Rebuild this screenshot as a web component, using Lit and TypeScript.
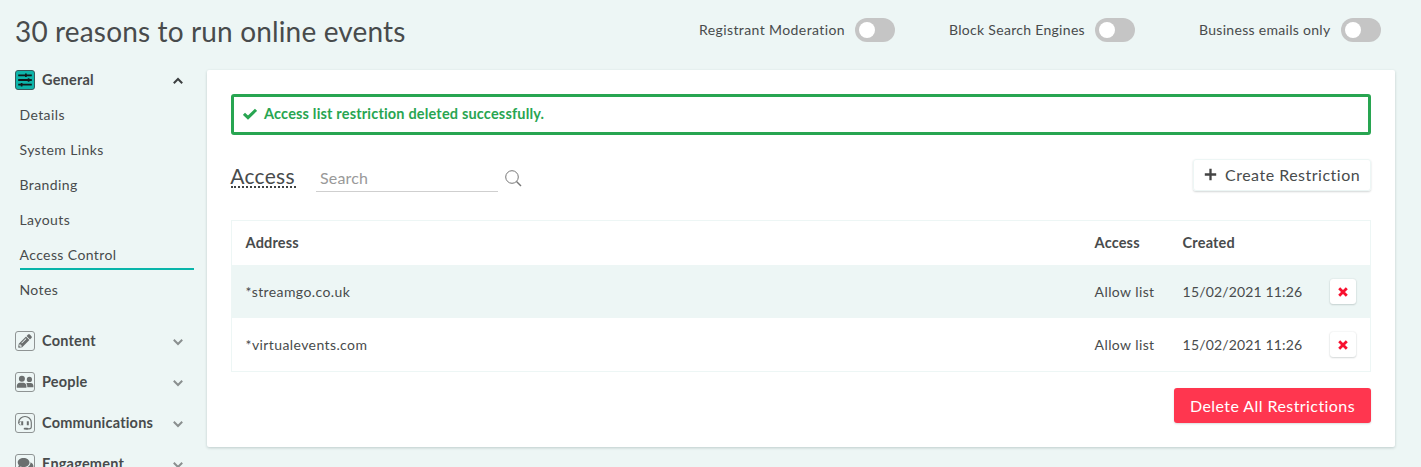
import { LitElement, html, css, svg } from "lit";
import { customElement } from "lit/decorators.js";
import { classMap } from "lit/directives/class-map.js";

const icons = {
  sliders: svg`<path d="M3.2 5.3h13.6M3.2 10h13.6M3.2 14.7h13.6" stroke="currentColor" stroke-width="1.8"/><path d="M10.9 3.5v3.6M13.6 8.2v3.6M6.6 12.9v3.6" stroke="currentColor" stroke-width="1.7"/>`,
  pencil: svg`<g fill="currentColor" transform="translate(3.2 3.2) scale(.0266)"><path d="M497.9 142.1l-46.1 46.1c-4.7 4.7-12.3 4.7-17 0l-111-111c-4.7-4.7-4.7-12.3 0-17l46.1-46.1c18.7-18.7 49.1-18.7 67.9 0l60.1 60.1c18.8 18.7 18.8 49.1 0 67.9zM284.2 99.8L21.6 362.4.4 483.9c-2.9 16.4 11.4 30.6 27.8 27.8l121.5-21.3 262.6-262.6c4.7-4.7 4.7-12.3 0-17l-111-111c-4.8-4.7-12.4-4.7-17.1 0zM124.1 339.9c-5.5-5.5-5.5-14.3 0-19.8l154-154c5.5-5.5 14.3-5.5 19.8 0s5.5 14.3 0 19.8l-154 154c-5.5 5.5-14.3 5.5-19.8 0zM88 424h48v36.3l-64.5 11.3-31.1-31.1L51.7 376H88v48z"/></g>`,
  people: svg`<g fill="currentColor"><circle cx="6.9" cy="6.8" r="3"/><circle cx="14.4" cy="7.4" r="2.6"/><path d="M1.8 15.8v-1.7c0-2 1.3-3.3 3-3.3h3.6c1.7 0 3 1.3 3 3.3v1.7z"/><path d="M12.3 15.3c.1-1.8-.3-3-1-3.9.5-.3 1-.4 1.6-.4h2.9c1.5 0 2.6 1.2 2.6 2.8v1.5z"/></g>`,
  headset: svg`<g fill="none" stroke="currentColor"><path d="M3.7 10.2V9.5a6.3 6 0 0 1 12.6 0v4.3c0 1.4-.9 2.1-2.2 2.1H10.5" stroke-width="1.1"/><path d="M7.2 8.2v4M12.8 8.2v4" stroke-width="2"/><path d="M5.5 8.6c-1.1.2-1.7.8-1.7 1.7s.6 1.5 1.7 1.7" stroke-width="1"/><path d="M9.6 15.7h2.6" stroke-width="1.8" stroke-linecap="round"/></g>`,
  comments: svg`<g fill="currentColor"><path d="M8.6 4C5.3 4 2.7 6 2.7 8.5c0 1.1.5 2 1.2 2.8-.2.8-.7 1.5-1.2 2 1.2 0 2.2-.4 3-.9.9.4 1.9.6 2.9.6 3.3 0 5.9-2 5.9-4.5S11.9 4 8.6 4z"/><path d="M15.5 8.2c.2 3.3-3 5.6-6.3 5.8 1 1.2 2.6 1.9 4.4 1.9.9 0 1.7-.2 2.4-.5.7.5 1.5.8 2.5.8-.5-.5-.9-1.1-1-1.7.6-.7.9-1.5.9-2.4 0-1.7-1.2-3.2-2.9-3.9z"/></g>`,
};

type IconName = keyof typeof icons;
interface Group { label: string; icon: IconName; open?: boolean; items?: string[]; }

const groups: Group[] = [
  { label: "General", icon: "sliders", open: true, items: ["Details", "System Links", "Branding", "Layouts", "Access Control", "Notes"] },
  { label: "Content", icon: "pencil" },
  { label: "People", icon: "people" },
  { label: "Communications", icon: "headset" },
  { label: "Engagement", icon: "comments" },
];
const toggles = ["Registrant Moderation", "Block Search Engines", "Business emails only"];
const rows = [
  { address: "*streamgo.co.uk", access: "Allow list", created: "15/02/2021 11:26" },
  { address: "*virtualevents.com", access: "Allow list", created: "15/02/2021 11:26" },
];

@customElement("side-nav")
export class SideNav extends LitElement {
  static styles = css`
    :host { display: block; width: 207px; flex: none; }
    .head { display: flex; align-items: center; height: 20px; padding-left: 15px; margin-bottom: 21px; font-size: 14.5px; font-weight: 700; letter-spacing: 0.2px; }
    .icon { box-sizing: border-box; width: 20px; height: 20px; border: 1px solid #8f9494; border-radius: 3px; color: #6b6f6f; margin-right: 7px; }
    .icon svg { display: block; width: 18px; height: 18px; }
    .head.open { margin-bottom: 7px; }
    .open .icon { background: #0db5aa; border-color: #38595a; color: #101a1a; }
    .label { width: 130px; }
    .chevron { width: 12px; height: 8px; color: #8a8f8f; margin-top: 2px; }
    .open .chevron { color: #3c3f40; }
    .items { padding: 0 13px 24px 20px; }
    .item { box-sizing: border-box; height: 35px; line-height: 35px; letter-spacing: 0.4px; text-indent: -0.5px; }
    .item.active { height: 33px; margin-bottom: 2px; line-height: 35px; border-bottom: 2px solid #09b5aa; }
  `;
  render() {
    return html`${groups.map((g) => html`
      <div class=${classMap({ head: true, open: !!g.open })}>
        <span class="icon"><svg viewBox="1 1 18 18">${icons[g.icon]}</svg></span>
        <span class="label">${g.label}</span>
        <svg class="chevron" viewBox="0 0 12 8" fill="none" stroke="currentColor" stroke-width="2">
          ${g.open ? svg`<path d="M1.8 6.2L6 2l4.2 4.2"/>` : svg`<path d="M1.8 1.8L6 6l4.2-4.2"/>`}
        </svg>
      </div>
      ${g.items ? html`<div class="items">${g.items.map((i) => html`<div class=${classMap({ item: true, active: i === "Access Control" })}>${i}</div>`)}</div>` : ""}
    `)}`;
  }
}

@customElement("access-panel")
export class AccessPanel extends LitElement {
  static styles = css`
    :host { display: block; box-sizing: border-box; width: 1188px; height: 377px; padding: 24px; background: #fff; border-radius: 2px; box-shadow: 0 1px 3px rgba(0, 40, 40, 0.2); }
    .alert { box-sizing: border-box; height: 41px; border: 3px solid #28a551; border-radius: 3px; display: flex; align-items: center; padding: 0 9px 2px; color: #28a551; font-size: 14.5px; font-weight: 700; letter-spacing: 0.18px; }
    .alert svg { width: 14px; height: 12px; margin-right: 7px; }
    .bar { display: flex; align-items: flex-start; height: 33px; margin-top: 24px; }
    .title { font-size: 21px; line-height: 26px; letter-spacing: 0.3px; width: 65px; white-space: nowrap; text-indent: -0.3px; margin: 4px 0.5px 0 -0.5px; height: 23px; border-bottom: 2px dotted #3f4243; }
    .search { box-sizing: border-box; width: 182px; height: 33px; line-height: 37px; margin-left: 20px; padding-left: 4px; border-bottom: 1px solid #cfcfcf; color: #999; font-size: 16px; letter-spacing: 0.15px; }
    .glass { width: 17px; height: 17px; margin: 11px auto 0 7px; }
    .create { box-sizing: border-box; display: flex; align-items: center; width: 178px; height: 32px; padding: 0 0 1px 10px; font-size: 16px; letter-spacing: 0.5px; border: 1px solid #edf6f5; border-radius: 3px; box-shadow: 0 1px 2px rgba(0, 30, 30, 0.18); white-space: nowrap; }
    .create svg { width: 13px; height: 13px; margin-right: 8px; }
    .table { border: 1px solid #edf6f5; margin-top: 28px; }
    .row { display: grid; grid-template-columns: 849px 88px 147px 27px; padding-left: 14px; align-items: center; height: 53px; letter-spacing: 0.4px; text-indent: -0.4px; }
    .row.header { height: 43px; padding-bottom: 1px; font-size: 14.5px; font-weight: 700; letter-spacing: 0.17px; }
    .row.shaded { background: #edf6f5; }
    .date { letter-spacing: 0.15px; }
    .remove { display: flex; align-items: center; justify-content: center; width: 26px; height: 25px; background: #fff; border-radius: 3px; box-shadow: 0 0 2px rgba(0, 30, 30, 0.12), 0 1px 2px rgba(0, 30, 30, 0.14); }
    .remove svg { width: 10px; height: 10px; }
    .actions { display: flex; justify-content: flex-end; margin-top: 16px; }
    .delete { box-sizing: border-box; width: 197px; height: 35px; line-height: 36px; text-align: center; background: #ff364f; color: #fff; border-radius: 3px; font-size: 16px; letter-spacing: 0.43px; box-shadow: 0 1px 2px rgba(0, 30, 30, 0.15); }
  `;
  render() {
    return html`
      <div class="alert">
        <svg viewBox="0 0 14 12"><path d="M1 5.8L5 9.6L13 1.8" fill="none" stroke="currentColor" stroke-width="3"/></svg>
        <span>Access list restriction deleted successfully.</span>
      </div>
      <div class="bar">
        <div class="title">Access</div>
        <div class="search">Search</div>
        <svg class="glass" viewBox="0 0 17 17" fill="none" stroke="#777" stroke-width="1"><circle cx="7" cy="7" r="6.3"/><path d="M11.5 11.5L16 16" stroke-width="1.4"/></svg>
        <div class="create">
          <svg viewBox="0 0 13 13"><path d="M6.5 .8v11.4M.8 6.5h11.4" stroke="#444" stroke-width="2.3"/></svg>
          <span>Create Restriction</span>
        </div>
      </div>
      <div class="table">
        <div class="row header"><span>Address</span><span>Access</span><span>Created</span></div>
        ${rows.map((r, i) => html`
          <div class=${classMap({ row: true, shaded: i % 2 === 0 })}>
            <span>${r.address}</span><span>${r.access}</span><span class="date">${r.created}</span>
            <span class="remove"><svg viewBox="0 0 10 10"><path d="M1.2 1.2l7.6 7.6M8.8 1.2L1.2 8.8" stroke="#f8102f" stroke-width="2.8"/></svg></span>
          </div>`)}
      </div>
      <div class="actions"><div class="delete">Delete All Restrictions</div></div>
    `;
  }
}

@customElement("app-root")
export class AppRoot extends LitElement {
  static styles = css`
    :host { display: block; height: 467px; overflow: hidden; background: #edf6f5; color: #484b4c; font: 14px/20px Lato, sans-serif; }
    .top { display: flex; justify-content: space-between; align-items: flex-start; height: 70px; padding: 0 40px 0 15px; box-sizing: border-box; }
    .name { font-size: 28px; line-height: 63px; letter-spacing: 0.15px; white-space: nowrap; }
    .toggles { display: grid; grid-template-columns: 250px 250px 182px; margin-top: 18px; }
    .toggle { display: flex; align-items: center; height: 24px; letter-spacing: 0.3px; white-space: nowrap; }
    .toggle:first-child { letter-spacing: 0.4px; }
    .switch { box-sizing: border-box; width: 40px; height: 24px; padding: 4px; margin-left: 10px; border-radius: 12px; background: #c5c5c5; }
    .knob { width: 16px; height: 16px; border-radius: 50%; background: #fff; }
    .main { display: flex; align-items: flex-start; }
  `;
  render() {
    return html`
      <div class="top">
        <span class="name">30 reasons to run online events</span>
        <div class="toggles">
          ${toggles.map((t) => html`<div class="toggle"><span>${t}</span><div class="switch"><div class="knob"></div></div></div>`)}
        </div>
      </div>
      <div class="main"><side-nav></side-nav><access-panel></access-panel></div>
    `;
  }
}
